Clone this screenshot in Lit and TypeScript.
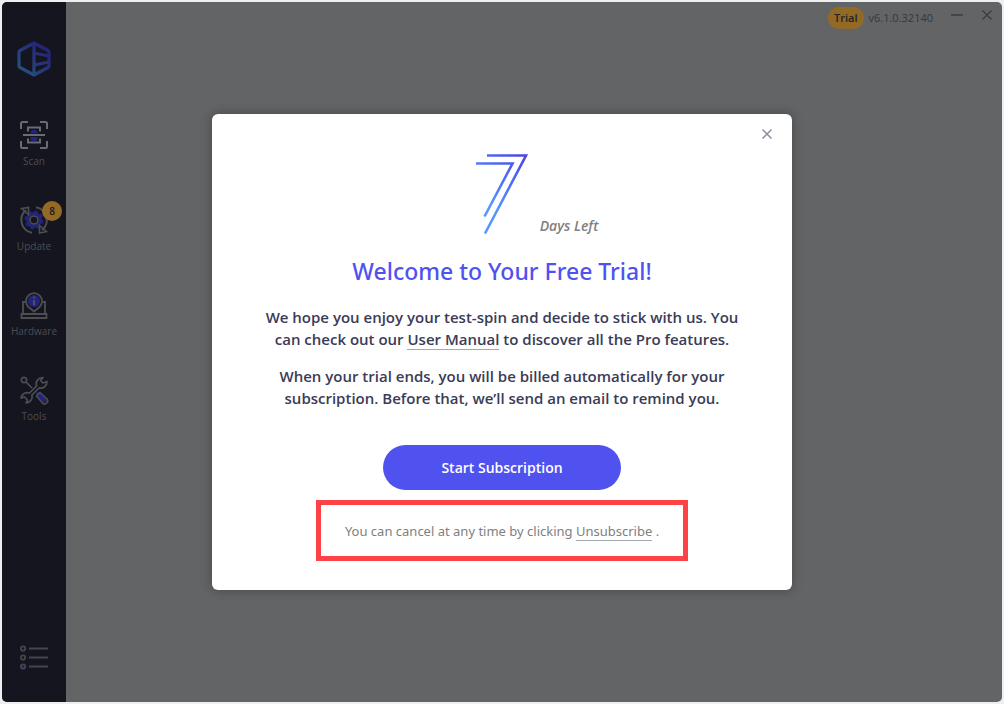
import { LitElement, html, css, svg } from "lit";
import { customElement, property } from "lit/decorators.js";

const scanIcon = svg`
  <g fill="none" stroke="#6a6b6e" stroke-width="2">
    <path d="M1 8V2.500Q1 1 2.500 1H8M20 1h5.500Q27 1 27 2.500V8M27 20v5.500Q27 27 25.500 27H20M8 27H2.500Q1 27 1 25.500V20"/>
    <path d="M8 10.500V6.500h12v4M8 17.500v4h12v-4"/>
    <path d="M3 14h22"/>
  </g>
  <path d="M10.500 12.500v-1.500l1.500-2h4l1.500 2v1.500zM10.500 16h7v2.500l-1.500 1.500h-4l-1.500-1.500z" fill="#23247c"/>`;

const updateIcon = svg`
  <circle cx="14" cy="14" r="6.500" fill="none" stroke="#23247c" stroke-width="3"/>
  <circle cx="14" cy="14" r="8.500" fill="none" stroke="#23247c" stroke-width="2" stroke-dasharray="3.400 3.276"/>
  <circle cx="14" cy="14" r="4" fill="none" stroke="#4d4e52" stroke-width="1.600"/>
  <g fill="none" stroke="#4d4e52" stroke-width="2">
    <path d="M6 4A13 13 0 0 0 12 26.800M22 24A13 13 0 0 0 16 1.200"/>
    <path d="M1.500 2.500L8.500 1.500V8.500ZM19.500 19.500L26.500 25.500L19.500 27Z" stroke-width="1.600"/>
  </g>`;

const hardwareIcon = svg`
  <circle cx="14" cy="10" r="6" fill="#23247c"/>
  <g fill="none" stroke="#4d4e52" stroke-width="1.800">
    <path d="M14 20.500L8.500 16A8 8 0 1 1 19.500 16Z"/>
    <path d="M5.500 11H3v12M22.500 11H25v12M1.500 23h25v4h-25z"/>
    <path d="M14 5.500v2M14 9v5.500" stroke="#4d4e66" stroke-width="2"/>
  </g>`;

const toolsIcon = svg`
  <path d="M18 18l6 6" stroke="#23247c" stroke-width="4" stroke-linecap="round"/>
  <g fill="none" stroke="#4d4e52" stroke-width="1.700" stroke-linejoin="round">
    <circle cx="4" cy="4" r="2.700"/>
    <path d="M6 6l6 6"/>
    <path d="M23 1.500a6.500 6.500 0 0 0-6.500 8.500L9.500 17A6.500 6.500 0 0 0 1 22l3.500-1 3 3L6 27A6.500 6.500 0 0 0 12 19l7-7A6.500 6.500 0 0 0 27 5.500l-4 1.500-2.500-2.500z"/>
    <path d="M16.500 20L20 16.500l6.500 6a2.800 2.800 0 0 1-4 4.500z"/>
  </g>`;

@customElement("nav-item")
export class NavItem extends LitElement {
  @property() label = "";
  @property({ type: Number }) count = 0;
  @property({ attribute: false }) icon: unknown;

  static styles = css`
    :host { display: block; }
    .item {
      position: relative;
      display: flex;
      flex-direction: column;
      align-items: center;
      gap: 5px;
      width: 100%;
      padding: 0;
      border: 0;
      background: none;
      color: #4c4d52;
      font: 10px/14px "Open Sans", "Noto Sans", sans-serif;
    }
    .icon { width: 28px; height: 28px; overflow: visible; }
    .count {
      position: absolute;
      top: -5px;
      right: 4px;
      width: 20px;
      border-radius: 50%;
      background: #936926;
      color: #1c1a1c;
      font-weight: 600;
      line-height: 20px;
    }
  `;

  render() {
    return html`<button class="item" type="button">
      <svg class="icon" viewBox="0 0 28 28" aria-hidden="true">${this.icon}</svg>
      <span>${this.label}</span>
      ${this.count ? html`<span class="count">${this.count}</span>` : ""}
    </button>`;
  }
}

@customElement("trial-dialog")
export class TrialDialog extends LitElement {
  static styles = css`
    :host { display: block; width: 580px; max-width: 100%; }
    .dialog {
      position: relative;
      display: flex;
      flex-direction: column;
      align-items: center;
      box-sizing: border-box;
      padding: 39px 24px 29px;
      border-radius: 6px;
      background: #fff;
      box-shadow: 0 0 12px rgba(0, 0, 0, 0.3);
      color: #3a3b57;
      text-align: center;
      font-family: "Open Sans", "Noto Sans", sans-serif;
    }
    .close {
      position: absolute;
      top: 10px;
      right: 15px;
      display: grid;
      place-items: center;
      width: 20px;
      height: 20px;
      padding: 0;
      border: 0;
      background: none;
    }
    .days {
      display: flex;
      align-items: flex-end;
      gap: 12px;
      margin-left: 70px;
    }
    .days-left {
      color: #808080;
      font-size: 14px;
      line-height: 18px;
      font-style: italic;
      font-weight: 600;
    }
    .title {
      margin: 20px 0 0;
      color: #5052f0;
      font-family: "Noto Sans", "Open Sans", sans-serif;
      font-size: 23px;
      line-height: 32px;
      font-weight: 500;
    }
    .text {
      margin: 19px 0 0;
      font-size: 15px;
      line-height: 22px;
      font-weight: 600;
    }
    .text + .text { margin-top: 15px; }
    .link {
      color: inherit;
      text-decoration: none;
      border-bottom: 1px solid #a3a8b2;
    }
    .start {
      width: 238px;
      height: 45px;
      margin: 36px 0 0;
      border: 0;
      border-radius: 23px;
      background: #5052f0;
      color: #fff;
      font: 600 14px/20px "Open Sans", "Noto Sans", sans-serif;
    }
    .cancel {
      margin: 10px 0 0;
      padding: 16px 24px 14px;
      border: 5px solid #ff4245;
      color: #808080;
      font-family: "Noto Sans", "Open Sans", sans-serif;
      font-size: 13px;
      line-height: 21px;
    }
  `;

  render() {
    return html`<section class="dialog" role="dialog" aria-labelledby="title">
      <button class="close" type="button" aria-label="Close">
        <svg width="10" height="10" viewBox="0 0 10 10"><path d="M.5.5l9 9M9.500.5l-9 9" stroke="#8c8c9c" stroke-width="1.500"/></svg>
      </button>
      <div class="days">
        <svg width="52" height="82" viewBox="0 0 52 82" role="img" aria-label="7">
          <defs>
            <linearGradient id="seven" gradientUnits="userSpaceOnUse" x1="48" y1="2" x2="5" y2="42">
              <stop offset="0" stop-color="#4b45e8"/>
              <stop offset="1" stop-color="#5596ff"/>
            </linearGradient>
          </defs>
          <path d="M11 2.500h39L9 80.500M0 10.500h36.500L8.500 63.500" fill="none" stroke="url(#seven)" stroke-width="2.600"/>
        </svg>
        <span class="days-left">Days Left</span>
      </div>
      <h1 class="title" id="title">Welcome to Your Free Trial!</h1>
      <p class="text">
        We hope you enjoy your test-spin and decide to stick with us. You<br />
        can check out our <a class="link" href="#manual">User Manual</a> to discover all the Pro features.
      </p>
      <p class="text">
        When your trial ends, you will be billed automatically for your<br />
        subscription. Before that, we’ll send an email to remind you.
      </p>
      <button class="start" type="button">Start Subscription</button>
      <p class="cancel">
        You can cancel at any time by clicking <a class="link" href="#unsubscribe">Unsubscribe</a> .
      </p>
    </section>`;
  }
}

@customElement("app-root")
export class AppRoot extends LitElement {
  static styles = css`
    :host {
      display: block;
      box-sizing: border-box;
      min-height: 100vh;
      padding: 2px;
      background: #edf0f1;
      font-family: "Open Sans", "Noto Sans", sans-serif;
    }
    .window {
      position: relative;
      display: grid;
      grid-template-columns: 64px 1fr;
      min-height: calc(100vh - 4px);
      border-radius: 5px;
      overflow: hidden;
      background: #636466;
    }
    .sidebar {
      display: flex;
      flex-direction: column;
      align-items: stretch;
      padding: 39px 0 32px;
      background: #14151f;
    }
    .logo { align-self: center; margin-bottom: 44px; }
    .nav { display: grid; gap: 38px; }
    .menu {
      display: grid;
      align-self: center;
      margin-top: auto;
      padding: 0;
      border: 0;
      background: none;
    }
    .titlebar {
      display: flex;
      justify-content: flex-end;
      align-items: flex-start;
      padding: 5px 9px 0 0;
      color: #36373b;
      font-size: 11px;
      line-height: 22px;
    }
    .badge {
      padding: 0 6px;
      margin-right: 5px;
      border-radius: 11px;
      background: #936926;
      color: #242223;
      font-weight: 600;
    }
    .control {
      display: grid;
      place-items: center;
      width: 12px;
      height: 16px;
      margin-left: 18px;
      padding: 0;
      border: 0;
      background: none;
    }
    .overlay {
      position: absolute;
      inset: 0;
      display: grid;
      place-items: center;
    }
  `;

  render() {
    return html`<main class="window">
      <aside class="sidebar">
        <svg class="logo" width="34" height="36" viewBox="0 0 34 36" aria-hidden="true">
          <defs>
            <linearGradient id="mark" x1="1" y1="0" x2="0" y2="1">
              <stop offset="0.200" stop-color="#262479"/>
              <stop offset="0.800" stop-color="#284a7c"/>
            </linearGradient>
          </defs>
          <path d="M17 2L31 9.500Q32 10 32 11.500V25Q32 26 31 26.500L17 34L3 26.500Q2 26 2 25V11.500Q2 10 3 9.500ZM17 2V34M17 12L32 15M17 24L32 21" fill="none" stroke="url(#mark)" stroke-width="3.200" stroke-linejoin="round"/>
        </svg>
        <nav class="nav">
          <nav-item label="Scan" .icon=${scanIcon}></nav-item>
          <nav-item label="Update" .count=${8} .icon=${updateIcon}></nav-item>
          <nav-item label="Hardware" .icon=${hardwareIcon}></nav-item>
          <nav-item label="Tools" .icon=${toolsIcon}></nav-item>
        </nav>
        <button class="menu" type="button" aria-label="Menu">
          <svg width="28" height="25" viewBox="0 0 28 25" fill="none" stroke="#45464b" stroke-width="1.800">
            <circle cx="3" cy="3.500" r="2.200"/><circle cx="3" cy="12.500" r="2.200"/><circle cx="3" cy="21.500" r="2.200"/>
            <path d="M9 3.500h19M9 12.500h19M9 21.500h19"/>
            <circle cx="3" cy="21.500" r="1.300" fill="#23247c" stroke="none"/>
          </svg>
        </button>
      </aside>
      <header class="titlebar">
        <span class="badge">Trial</span>
        <span>v6.1.0.32140</span>
        <button class="control" type="button" aria-label="Minimize">
          <svg width="12" height="10" viewBox="0 0 12 10"><path d="M0 5h12" stroke="#3c3d41" stroke-width="1.400"/></svg>
        </button>
        <button class="control" type="button" aria-label="Close window">
          <svg width="10" height="10" viewBox="0 0 10 10"><path d="M.5.5l9 9M9.500.5l-9 9" stroke="#3c3d41" stroke-width="1.400"/></svg>
        </button>
      </header>
      <div class="overlay"><trial-dialog></trial-dialog></div>
    </main>`;
  }
}
